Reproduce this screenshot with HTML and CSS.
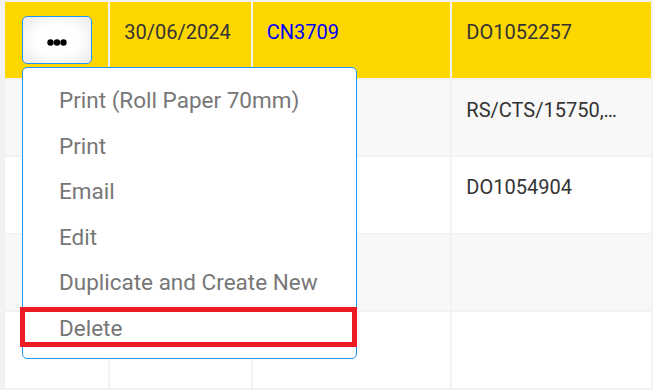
FILE: index.html
```html
<!DOCTYPE html>
<html lang="en">
<head>
  <meta charset="UTF-8">
  <meta name="viewport" content="width=device-width, initial-scale=1.0">
  <title>Delivery Orders</title>
  <link rel="stylesheet" href="styles.css">
</head>
<body>
  <div class="grid-wrap">
    <table class="grid">
      <colgroup>
        <col class="c-action">
        <col class="c-date">
        <col class="c-no">
        <col class="c-ref">
        <col class="c-more">
      </colgroup>
      <tbody>
        <tr class="selected">
          <td class="action-cell">
            <button class="more-btn" type="button" aria-label="Actions">
              <svg width="20" height="7" viewBox="0 0 20 7"><circle cx="3.5" cy="3.5" r="3.2"/><circle cx="10" cy="3.5" r="3.2"/><circle cx="16.5" cy="3.5" r="3.2"/></svg>
            </button>
            <ul class="menu">
              <li>Print (Roll Paper 70mm)</li>
              <li>Print</li>
              <li>Email</li>
              <li>Edit</li>
              <li>Duplicate and Create New</li>
              <li class="flagged">Delete</li>
            </ul>
          </td>
          <td>30/06/2024</td>
          <td><a class="doc-link" href="#">CN3709</a></td>
          <td>DO1052257</td>
          <td></td>
        </tr>
        <tr class="alt">
          <td></td>
          <td></td>
          <td></td>
          <td>RS/CTS/15750,…</td>
          <td></td>
        </tr>
        <tr>
          <td></td>
          <td></td>
          <td></td>
          <td>DO1054904</td>
          <td></td>
        </tr>
        <tr class="alt">
          <td></td>
          <td></td>
          <td></td>
          <td></td>
          <td></td>
        </tr>
        <tr>
          <td></td>
          <td></td>
          <td></td>
          <td></td>
          <td></td>
        </tr>
      </tbody>
    </table>
  </div>
</body>
</html>
```
FILE: styles.css
```css
body {
  margin: 0;
  background: #fff;
  font-family: Roboto, "Noto Sans", sans-serif;
}

.grid-wrap {
  box-sizing: border-box;
  width: 653px;
  padding-left: 3px;
  overflow: hidden;
  background-color: #f2f2f2;
}

.grid {
  table-layout: fixed;
  width: 660px;
  border-collapse: separate;
  border-spacing: 2px;
  background-color: #f2f2f2;
}

.c-action { width: 103px; }
.c-date { width: 140px; }
.c-no { width: 197px; }
.c-ref { width: 198px; }
.c-more { width: 8px; }

.grid tr {
  height: 75.5px;
}

.grid td {
  box-sizing: border-box;
  padding: 18px 10px 0 14px;
  vertical-align: top;
  white-space: nowrap;
  background-color: #fff;
  color: #333;
  font-size: 20px;
  line-height: 24px;
}

.grid tr.alt td {
  background-color: #f8f8f8;
}

.grid tr.selected td {
  background-color: #ffd700;
}

.doc-link {
  color: #0000ff;
  text-decoration: none;
}

.grid td.action-cell {
  position: relative;
  padding: 14px 0 0 17px;
}

.more-btn {
  display: flex;
  align-items: center;
  justify-content: center;
  width: 70px;
  height: 48px;
  padding: 5px 0 0;
  border: 1px solid #2196f3;
  border-radius: 5px;
  background: radial-gradient(ellipse at center, #fff 45%, #e9e9e9 100%);
  cursor: pointer;
}

.more-btn svg {
  fill: #000;
}

.menu {
  position: absolute;
  top: 65px;
  left: 17px;
  z-index: 2;
  box-sizing: border-box;
  width: 335px;
  height: 292px;
  margin: 0;
  padding: 10px 0 0;
  list-style: none;
  background: #fff;
  border: 1px solid #2196f3;
  border-radius: 5px;
}

.menu li {
  height: 45.5px;
  padding-left: 36px;
  color: #777;
  font-size: 22.5px;
  line-height: 45.5px;
  white-space: nowrap;
  cursor: pointer;
}

.menu li.flagged {
  position: relative;
}

.menu li.flagged::after {
  content: "";
  position: absolute;
  top: 1.5px;
  left: -3px;
  right: -1px;
  height: 40px;
  box-sizing: border-box;
  border: 5px solid #ed1c24;
}
```
